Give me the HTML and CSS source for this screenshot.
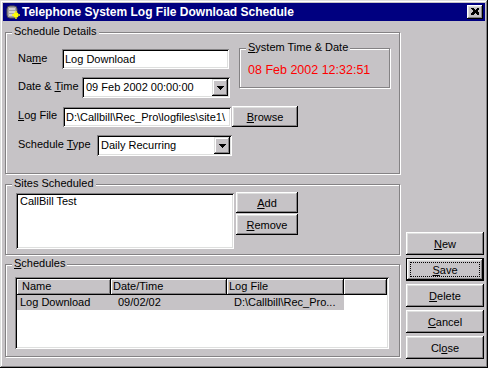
FILE: index.html
```html
<!DOCTYPE html>
<html lang="en">
<head>
  <meta charset="UTF-8">
  <title>Telephone System Log File Download Schedule</title>
  <link rel="stylesheet" href="styles.css">
</head>
<body>
  <div class="window">
    <div class="titlebar">
      <svg class="app-icon" viewBox="0 0 16 16" width="16" height="16">
        <rect x="2" y="2" width="10" height="12" rx="3" fill="#a5a2a5" stroke="#525152"/>
        <path d="M4 5h6M4 8h6M4 11h5" stroke="#ffffff"/>
        <path d="M11 7v8M7 11h8M9 9l4 4M13 9l-4 4" stroke="#ffff00" stroke-width="1.4"/>
      </svg>
      <span class="title">Telephone System Log File Download Schedule</span>
      <button class="close-btn">
        <svg viewBox="0 0 8 7" width="8" height="7">
          <path d="M0 0h2l2 2 2-2h2v1l-2 2 2 2v2h-2l-2-2-2 2h-2v-2l2-2-2-2z" fill="#000" shape-rendering="crispEdges"/>
        </svg>
      </button>
    </div>

    <div class="main">
      <div class="left">
        <div class="group details">
          <span class="legend">Schedule Details</span>
          <div class="top">
            <div class="fields">
              <div class="row">
                <label class="lbl lbl-name">Na<u>m</u>e</label>
                <div class="edit w-name">Log Download</div>
              </div>
              <div class="row row-date">
                <label class="lbl lbl-date">Date &amp; <u>T</u>ime</label>
                <div class="combo w-date">
                  <span class="combo-text">09 Feb 2002 00:00:00</span>
                  <span class="drop"><svg viewBox="0 0 7 4" width="7" height="4"><path d="M0 0h7v1h-1v1h-1v1h-1v1h-1v-1h-1v-1h-1v-1h-1z" fill="#000" shape-rendering="crispEdges"/></svg></span>
                </div>
              </div>
            </div>
            <div class="group clock">
              <span class="legend"><u>S</u>ystem Time &amp; Date</span>
              <div class="clock-time">08 Feb 2002 12:32:51</div>
            </div>
          </div>
          <div class="row row-log">
            <label class="lbl lbl-log"><u>L</u>og File</label>
            <div class="edit w-log">D:\Callbill\Rec_Pro\logfiles\site1\</div>
            <button class="btn browse"><u>B</u>rowse</button>
          </div>
          <div class="row row-type">
            <label class="lbl lbl-type">Schedule <u>T</u>ype</label>
            <div class="combo w-type">
              <span class="combo-text">Daily Recurring</span>
              <span class="drop"><svg viewBox="0 0 7 4" width="7" height="4"><path d="M0 0h7v1h-1v1h-1v1h-1v1h-1v-1h-1v-1h-1v-1h-1z" fill="#000" shape-rendering="crispEdges"/></svg></span>
            </div>
          </div>
        </div>

        <div class="group sites">
          <span class="legend">Sites Scheduled</span>
          <div class="sites-body">
            <div class="listbox">
              <div class="list-item">CallBill Test</div>
            </div>
            <div class="site-btns">
              <button class="btn"><u>A</u>dd</button>
              <button class="btn"><u>R</u>emove</button>
            </div>
          </div>
        </div>

        <div class="group schedules">
          <span class="legend"><u>S</u>chedules</span>
          <div class="listview">
            <div class="lv-header">
              <div class="lv-col col-name">Name</div>
              <div class="lv-col col-date">Date/Time</div>
              <div class="lv-col col-file">Log File</div>
              <div class="lv-col col-rest"></div>
            </div>
            <div class="lv-row selected">
              <div class="lv-cell col-name">Log Download</div>
              <div class="lv-cell col-date">09/02/02</div>
              <div class="lv-cell col-file">D:\Callbill\Rec_Pro...</div>
            </div>
          </div>
        </div>
      </div>

      <div class="side">
        <button class="btn side-btn"><u>N</u>ew</button>
        <button class="btn side-btn default"><u>S</u>ave</button>
        <button class="btn side-btn"><u>D</u>elete</button>
        <button class="btn side-btn"><u>C</u>ancel</button>
        <button class="btn side-btn">Cl<u>o</u>se</button>
      </div>
    </div>
  </div>
</body>
</html>
```

FILE: styles.css
```css
body {
  margin: 0;
  background: #c6c3c6;
  font-family: "Liberation Sans", Arial, sans-serif;
  font-size: 11px;
  color: #000;
}
.window {
  width: 488px;
  height: 368px;
  box-sizing: border-box;
  padding: 3px;
  background: #c6c3c6;
  box-shadow: inset -1px -1px #000, inset 1px 1px #dedfde, inset -2px -2px #848284, inset 2px 2px #fff;
  display: flex;
  flex-direction: column;
}
.titlebar {
  height: 18px;
  flex: none;
  background: #000080;
  color: #fff;
  display: flex;
  align-items: center;
  padding: 0 2px;
}
.app-icon {
  flex: none;
}
.title {
  margin-left: 1px;
  font-weight: bold;
  font-size: 12px;
  flex: 1;
  white-space: nowrap;
}
.close-btn {
  width: 16px;
  height: 14px;
  padding: 0;
  border: 0;
  background: #c6c3c6;
  box-shadow: inset -1px -1px #000, inset 1px 1px #fff, inset -2px -2px #848284, inset 2px 2px #dedfde;
  display: flex;
  align-items: center;
  justify-content: center;
}
.close-btn svg {
  margin: 0 0 1px 0;
}

.main {
  flex: 1;
  display: flex;
}
.left {
  margin-left: 2px;
  width: 395px;
}

/* etched group box */
.group {
  position: relative;
  box-sizing: border-box;
  border: 1px solid #848284;
  box-shadow: inset 1px 1px #fff, 1px 1px #fff;
}
.legend {
  position: absolute;
  top: -8px;
  left: 6px;
  padding: 0 2px;
  line-height: 13px;
  background: #c6c3c6;
  white-space: nowrap;
}

.details {
  margin-top: 11px;
  height: 142px;
  padding: 16px 0 0 12px;
}
.top {
  display: flex;
  align-items: flex-start;
}
.fields {
  width: 212px;
}
.row {
  display: flex;
  align-items: center;
}
.row-date {
  margin-top: 8px;
}
.row-log {
  margin-top: 8px;
  height: 21px;
}
.row-type {
  margin-top: 8px;
}
.lbl {
  flex: none;
  white-space: nowrap;
  margin-top: -3px;
}
.lbl-name { width: 44px; }
.lbl-date { width: 64px; }
.lbl-log { width: 45px; }
.lbl-type { width: 79px; }

.edit {
  height: 20px;
  box-sizing: border-box;
  background: #fff;
  box-shadow: inset 1px 1px #848284, inset -1px -1px #fff, inset 2px 2px #000, inset -2px -2px #dedfde;
  padding: 0 2px 0 3px;
  line-height: 20px;
  white-space: nowrap;
  overflow: hidden;
}
.w-name { width: 167px; }
.w-log { width: 168px; }

.combo {
  height: 21px;
  box-sizing: border-box;
  padding: 2px;
  display: flex;
  background: #fff;
  box-shadow: inset 1px 1px #848284, inset -1px -1px #fff, inset 2px 2px #000, inset -2px -2px #dedfde;
}
.w-date { width: 149px; }
.w-type { width: 135px; }
.combo-text {
  flex: 1;
  padding-left: 2px;
  line-height: 17px;
  white-space: nowrap;
}
.drop {
  width: 16px;
  height: 17px;
  background: #c6c3c6;
  box-shadow: inset -1px -1px #000, inset 1px 1px #dedfde, inset -2px -2px #848284, inset 2px 2px #fff;
  display: flex;
  align-items: center;
  justify-content: center;
}

.clock {
  margin: -1px 0 0 9px;
  width: 151px;
  height: 40px;
  padding: 14px 0 0 8px;
}
.clock-time {
  color: #ff0000;
  font-size: 12.5px;
  line-height: 14px;
  white-space: nowrap;
}

.btn {
  font: inherit;
  font-weight: normal;
  color: #000;
  background: #c6c3c6;
  border: 0;
  padding: 0;
  box-shadow: inset -1px -1px #000, inset 1px 1px #fff, inset -2px -2px #848284, inset 2px 2px #dedfde;
}
.browse {
  width: 66px;
  height: 21px;
  margin-left: 1px;
}

.sites {
  margin-top: 10px;
  height: 71px;
  padding: 8px 0 0 10px;
}
.sites-body {
  display: flex;
  align-items: flex-start;
}
.listbox {
  width: 218px;
  height: 56px;
  box-sizing: border-box;
  padding: 2px 4px;
  background: #fff;
  box-shadow: inset 1px 1px #848284, inset -1px -1px #fff, inset 2px 2px #000, inset -2px -2px #dedfde;
}
.list-item {
  line-height: 13px;
}
.site-btns {
  margin: -1px 0 0 2px;
  display: flex;
  flex-direction: column;
  gap: 1px;
}
.site-btns .btn {
  width: 62px;
  height: 21px;
}

.schedules {
  margin-top: 9px;
  height: 93px;
  padding: 12px 0 0 9px;
}
.listview {
  width: 374px;
  height: 72px;
  box-sizing: border-box;
  padding: 2px;
  background: #fff;
  box-shadow: inset 1px 1px #848284, inset -1px -1px #fff, inset 2px 2px #000, inset -2px -2px #dedfde;
}
.lv-header {
  display: flex;
  height: 16px;
}
.lv-col {
  box-sizing: border-box;
  height: 16px;
  line-height: 15px;
  padding-left: 2px;
  background: #c6c3c6;
  box-shadow: inset -1px -1px #000, inset 1px 1px #fff, inset -2px -2px #848284;
  white-space: nowrap;
}
.lv-col.col-name { padding-left: 5px; }
.col-name { width: 94px; }
.col-date { width: 116px; }
.col-file { width: 117px; }
.col-rest { flex: 1; }
.lv-row {
  display: flex;
  height: 15px;
  line-height: 15px;
}
.lv-row.selected {
  width: 327px;
  background: #c6c3c6;
}
.lv-cell {
  box-sizing: border-box;
  padding-left: 7px;
  white-space: nowrap;
}
.lv-cell.col-name { padding-left: 3px; }

.side {
  margin-left: 6px;
  width: 78px;
  display: flex;
  flex-direction: column;
  justify-content: flex-end;
  gap: 3px;
  padding-bottom: 6px;
}
.side-btn {
  height: 23px;
}
.default {
  position: relative;
  box-shadow: inset 0 0 0 1px #000, inset -2px -2px #000, inset 2px 2px #fff, inset -3px -3px #848284, inset 3px 3px #dedfde;
}
.default::after {
  content: "";
  position: absolute;
  top: 4px;
  left: 4px;
  right: 4px;
  bottom: 4px;
  border: 1px dotted #000;
}
```
